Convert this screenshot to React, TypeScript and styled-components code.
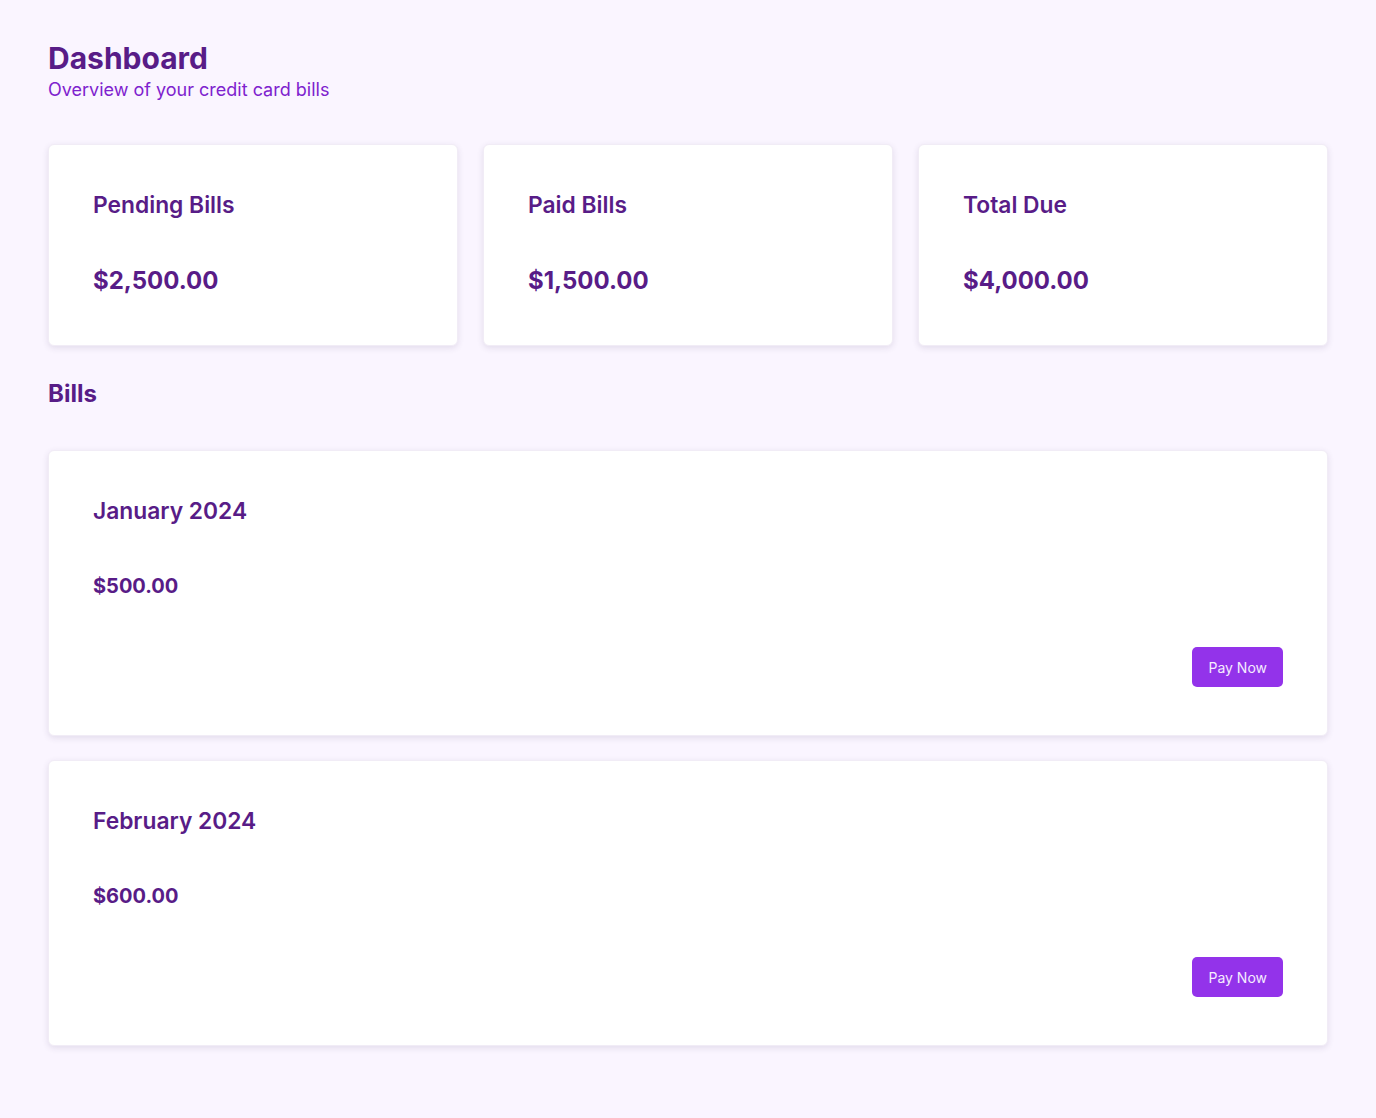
import React from "react";
import styled, { createGlobalStyle } from "styled-components";

const GlobalStyle = createGlobalStyle`
  html, body {
    margin: 0;
    padding: 0;
    background: #faf5ff;
    font-family: Inter, "Noto Sans", sans-serif;
  }
  * { box-sizing: border-box; }
`;

const Page = styled.div`
  min-height: 1118px;
  padding: 40px 48px 48px;
  background: #faf5ff;
`;

const Header = styled.header`
  display: flex;
  flex-direction: column;
  margin-bottom: 41px;
`;

const Title = styled.h1`
  margin: 0;
  font-size: 30px;
  line-height: 36px;
  font-weight: 700;
  color: #581c87;
`;

const Subtitle = styled.p`
  margin: 0;
  font-size: 18px;
  line-height: 27px;
  color: #7e22ce;
`;

const StatsGrid = styled.div`
  display: grid;
  grid-template-columns: repeat(3, 1fr);
  gap: 25px;
`;

const Card = styled.div<{ $bottom: number }>`
  background: #ffffff;
  border: 1px solid #f1ecf6;
  border-radius: 6px;
  box-shadow: 0 2px 6px rgba(60, 40, 90, 0.12);
  padding: 44px 44px ${(p) => p.$bottom}px;
  display: flex;
  flex-direction: column;
`;

const CardTitle = styled.h3`
  margin: 0;
  font-size: 22.8px;
  line-height: 32px;
  font-weight: 600;
  color: #581c87;
`;

const Amount = styled.div<{ $size: number }>`
  margin-top: ${(p) => (p.$size > 21 ? 42 : 44)}px;
  font-size: ${(p) => p.$size}px;
  line-height: 1.5;
  font-weight: 700;
  color: #581c87;
`;

const SectionTitle = styled.h2`
  margin: 30px 0 38px;
  font-size: 24px;
  line-height: 36px;
  font-weight: 700;
  color: #581c87;
`;

const BillList = styled.div`
  display: flex;
  flex-direction: column;
  gap: 24px;
`;

const Actions = styled.div`
  display: flex;
  justify-content: flex-end;
  margin-top: 46px;
`;

const PayButton = styled.button`
  height: 40px;
  padding: 0 16px;
  border: none;
  border-radius: 5px;
  background: #9333ea;
  color: #f5ecff;
  font-family: Inter, "Noto Sans", sans-serif;
  font-size: 14px;
  cursor: pointer;
`;

const stats = [
  { label: "Pending Bills", value: "$2,500.00" },
  { label: "Paid Bills", value: "$1,500.00" },
  { label: "Total Due", value: "$4,000.00" },
];

const bills = [
  { month: "January 2024", amount: "$500.00" },
  { month: "February 2024", amount: "$600.00" },
];

export default function App() {
  return (
    <>
      <GlobalStyle />
      <Page>
        <Header>
          <Title>Dashboard</Title>
          <Subtitle>Overview of your credit card bills</Subtitle>
        </Header>
        <StatsGrid>
          {stats.map((s) => (
            <Card key={s.label} $bottom={46}>
              <CardTitle>{s.label}</CardTitle>
              <Amount $size={24}>{s.value}</Amount>
            </Card>
          ))}
        </StatsGrid>
        <SectionTitle>Bills</SectionTitle>
        <BillList>
          {bills.map((b) => (
            <Card key={b.month} $bottom={48}>
              <CardTitle>{b.month}</CardTitle>
              <Amount $size={20}>{b.amount}</Amount>
              <Actions>
                <PayButton>Pay Now</PayButton>
              </Actions>
            </Card>
          ))}
        </BillList>
      </Page>
    </>
  );
}
